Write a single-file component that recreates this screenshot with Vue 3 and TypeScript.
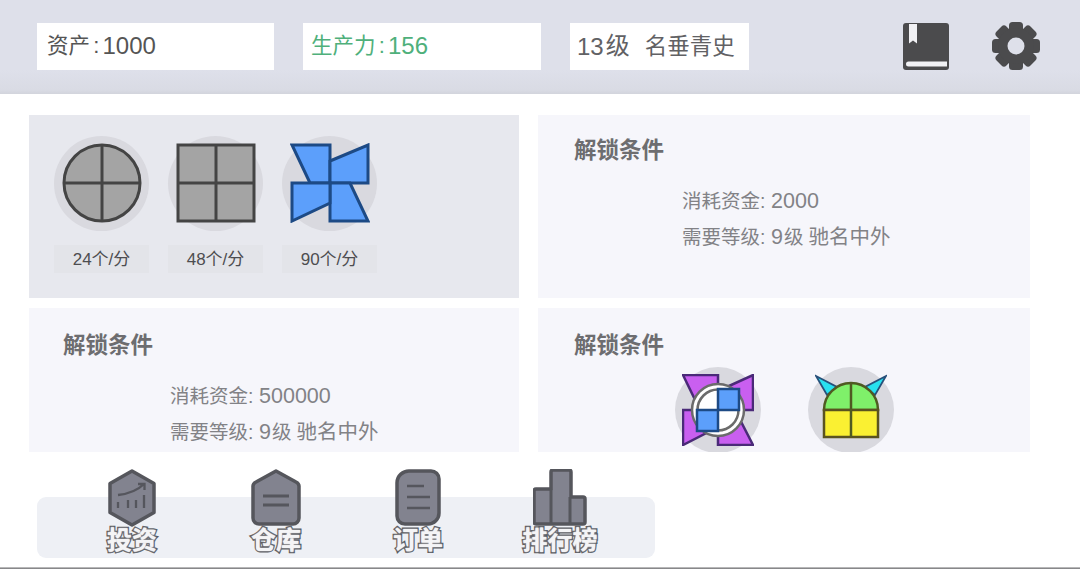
<script setup lang="ts">
const rates = ['24个/分', '48个/分', '90个/分']
const teeth = [0, 45, 90, 135, 180, 225, 270, 315]
</script>

<template>
  <div class="page">
    <header class="top">
      <div class="stat s1"><span class="line"><span class="cjk">资产</span><span class="c">:</span>1000</span></div>
      <div class="stat s2 green"><span class="line"><span class="cjk">生产力</span><span class="c">:</span>156</span></div>
      <div class="stat s3"><span class="line">13<span class="lv">级</span><span class="name">名垂青史</span></span></div>
      <div class="tools">
        <svg viewBox="0 0 48 48" width="48" height="48">
          <rect x="1" y="1" width="46" height="47" rx="3" fill="#4b4b4d"/>
          <path fill="#f1f1f4" d="M7 2H15V21.500L11 18.500 7 21.500Z"/>
          <path fill="#f1f1f4" d="M6.500 39.500H45V44.500H6.500A2.500 2.500 0 0 1 6.500 39.500Z"/>
        </svg>
        <svg viewBox="0 0 48 48" width="48" height="48">
          <g fill="#4b4b4d">
            <rect v-for="t in teeth" :key="t" x="17" y="0" width="14" height="14" rx="3.500" :transform="`rotate(${t} 24 24)`"/>
            <circle cx="24" cy="24" r="18"/>
          </g>
          <circle cx="24" cy="24" r="8.500" fill="#dee0ea"/>
        </svg>
      </div>
    </header>

    <main class="grid">
      <section class="panel active">
        <div class="machines">
          <div class="machine" v-for="(r, i) in rates" :key="r">
            <div class="disc">
              <svg v-if="i === 0" class="shape" viewBox="0 0 80 80" width="80" height="80">
                <circle cx="40" cy="40" r="38" fill="#a4a4a4" stroke="#444" stroke-width="3"/>
                <path d="M40 2V78M2 40H78" stroke="#444" stroke-width="3"/>
              </svg>
              <svg v-else-if="i === 1" class="shape" viewBox="0 0 80 80" width="80" height="80">
                <rect x="2" y="2" width="76" height="76" fill="#a4a4a4" stroke="#444" stroke-width="3"/>
                <path d="M40 2V78M2 40H78" stroke="#444" stroke-width="3"/>
              </svg>
              <svg v-else class="shape" viewBox="0 0 80 80" width="80" height="80">
                <g fill="#5c9ffb" stroke="#1d4a85" stroke-width="3" stroke-linejoin="miter">
                  <path d="M2 2H40V40H20Z"/>
                  <path d="M40 18L78 2V40H40Z"/>
                  <path d="M40 40H60L78 78H40Z"/>
                  <path d="M2 40H40V60L2 78Z"/>
                </g>
              </svg>
            </div>
            <div class="rate">{{ r }}</div>
          </div>
        </div>
      </section>

      <section class="panel">
        <h3 class="title t-right">解锁条件</h3>
        <div class="cond c-right">
          <p>消耗资金<span class="colon">:</span><span class="num">2000</span></p>
          <p>需要等级<span class="colon">:</span><span class="num">9</span>级<span class="rank">驰名中外</span></p>
        </div>
      </section>

      <section class="panel low">
        <h3 class="title t-left">解锁条件</h3>
        <div class="cond c-left">
          <p>消耗资金<span class="colon">:</span><span class="num">500000</span></p>
          <p>需要等级<span class="colon">:</span><span class="num">9</span>级<span class="rank">驰名中外</span></p>
        </div>
      </section>

      <section class="panel low">
        <h3 class="title t-right t-low">解锁条件</h3>
        <div class="rewards">
          <div class="disc small">
            <svg viewBox="0 0 72 72" width="72" height="72">
              <g fill="#c95ff0" stroke="#4a2a78" stroke-width="2.500">
                <path d="M1 1H36V36H18Z"/>
                <path d="M36 17L71 1V36H36Z"/>
                <path d="M36 36H53L71 71H36Z"/>
                <path d="M1 36H36V53L1 71Z"/>
              </g>
              <circle cx="36" cy="36" r="26" fill="#fff" stroke="#6b6b6b" stroke-width="2.500"/>
              <circle cx="36" cy="36" r="20.500" fill="#fff" stroke="#6b6b6b" stroke-width="2.500"/>
              <g fill="#5c9ffb" stroke="#1d4a85" stroke-width="2.500">
                <rect x="36" y="15" width="21" height="21"/>
                <rect x="15" y="36" width="21" height="21"/>
              </g>
            </svg>
          </div>
          <div class="disc small">
            <svg viewBox="0 0 72 72" width="72" height="72">
              <g fill="#28e0ef" stroke="#27507a" stroke-width="1.800">
                <path d="M1 2L22 13L12 21Z"/>
                <path d="M71 2L50 13L60 21Z"/>
              </g>
              <path d="M9 36A27 27 0 0 1 63 36Z" fill="#7ff06a" stroke="#4f5a22" stroke-width="2.500"/>
              <rect x="9" y="36" width="54" height="27" fill="#faf032" stroke="#5a5320" stroke-width="2.500"/>
              <path d="M36 9V63" stroke="#4f5a22" stroke-width="2.500"/>
            </svg>
          </div>
        </div>
      </section>
    </main>

    <nav class="bar">
      <div class="item i1">
        <svg viewBox="0 0 50 58" width="50" height="58">
          <path d="M25 2L47 14.500V43.500L25 56 3 43.500V14.500Z" fill="#82838f" stroke="#55565c" stroke-width="3.500" stroke-linejoin="round"/>
          <path d="M11 26C20 25 30 22 37 15M31 15H37.500V21M11 33V39M21 31V39M37 26V39M29 31V39" fill="none" stroke="#55565d" stroke-width="2.300"/>
        </svg>
        <span class="cap">投资</span>
      </div>
      <div class="item i2">
        <svg viewBox="0 0 50 58" width="50" height="58">
          <path d="M25 2L45 13a5 5 0 0 1 3 5V49a6 6 0 0 1-6 6H8a6 6 0 0 1-6-6V18a5 5 0 0 1 3-5Z" fill="#82838f" stroke="#55565c" stroke-width="3.500" stroke-linejoin="round"/>
          <path d="M12 27H38M12 36H38" stroke="#55565d" stroke-width="3"/>
        </svg>
        <span class="cap">仓库</span>
      </div>
      <div class="item i3">
        <svg viewBox="0 0 46 58" width="46" height="58">
          <path d="M15 2H36a8 8 0 0 1 8 8V44a11 11 0 0 1-11 11H10a8 8 0 0 1-8-8V14A12 12 0 0 1 15 2Z" fill="#82838f" stroke="#55565c" stroke-width="3.500"/>
          <path d="M12 17H29M12 28H35M12 39H35" stroke="#55565d" stroke-width="2.500"/>
        </svg>
        <span class="cap">订单</span>
      </div>
      <div class="item i4">
        <svg viewBox="0 0 54 58" width="54" height="58">
          <path d="M3 20H18V3a2 2 0 0 1 2-2H36a2 2 0 0 1 2 2V28H50a2 2 0 0 1 2 2V53a2 2 0 0 1-2 2H3a2 2 0 0 1-2-2V22a2 2 0 0 1 2-2Z" fill="#82838f" stroke="#55565c" stroke-width="3.500" stroke-linejoin="round"/>
          <path d="M18 20V55M37 28V55" stroke="#55565c" stroke-width="3"/>
        </svg>
        <span class="cap">排行榜</span>
      </div>
    </nav>
    <div class="edge"></div>
  </div>
</template>

<style>
html, body { margin: 0; background: #fff; }
</style>

<style scoped>
.page {
  width: 1080px;
  height: 569px;
  overflow: hidden;
  display: flex;
  flex-direction: column;
  background: #fff;
  font-family: "Liberation Sans", "Noto Sans CJK SC", sans-serif;
}
.top {
  height: 94px;
  flex: none;
  box-sizing: border-box;
  display: flex;
  align-items: flex-start;
  padding: 23px 0 0 37px;
  background: linear-gradient(#dee0ea 0, #dee0ea 70px, #d9dbe4 90px, #d2d4dc 94px);
}
.stat {
  height: 47px;
  box-sizing: border-box;
  background: #fff;
  display: flex;
  align-items: center;
  font-size: 24px;
  color: #555;
  white-space: pre;
}
.line { display: block; line-height: 30px; margin-top: -1px; }
.cjk { font-size: 21.5px; vertical-align: 1px; }
.c { display: inline-block; width: 12.5px; text-align: center; font-size: 22px; vertical-align: 1px; }
.s1 { width: 237px; padding-left: 10px; margin-right: 29px; }
.s2 { width: 238px; padding-left: 8px; margin-right: 29px; }
.s3 { width: 179px; padding-left: 7px; color: #616164; }
.lv { font-size: 24px; margin-left: 2px; vertical-align: 1px; }
.name { font-size: 22.5px; margin-left: 15px; vertical-align: 1px; }
.green { color: #4fb07b; }
.tools { display: flex; margin-left: 153px; margin-top: -1px; gap: 42px; }
.grid {
  margin: 21px 0 0 29px;
  display: grid;
  grid-template-columns: 490px 492px;
  grid-template-rows: 183px 144px;
  column-gap: 19px;
  row-gap: 10px;
  flex: none;
}
.panel { background: #f6f6fb; overflow: hidden; }
.active { background: #e7e8ee; }
.machines { display: flex; gap: 19px; padding: 21px 0 0 25px; }
.machine { width: 95px; display: flex; flex-direction: column; align-items: center; }
.disc {
  width: 95px;
  height: 95px;
  border-radius: 50%;
  background: #d9d9df;
  display: flex;
  align-items: center;
  justify-content: center;
}
.shape { margin-bottom: 2px; }
.rate {
  margin-top: 14px;
  width: 95px;
  height: 28px;
  box-sizing: border-box;
  padding-bottom: 3px;
  background: #e3e4e9;
  font-size: 17px;
  color: #4d4d50;
  display: flex;
  align-items: center;
  justify-content: center;
}
.title {
  margin: 0;
  font-size: 22.5px;
  font-weight: 700;
  color: #6d6d70;
  line-height: 30px;
  padding-top: 21px;
}
.t-right { padding-left: 36px; }
.t-left { padding-left: 34px; padding-top: 23px; }
.t-low { padding-top: 23px; }
.cond { font-size: 19.5px; color: #828286; }
.cond p { margin: 0; line-height: 36px; white-space: pre; }
.colon { display: inline-block; width: 11px; text-align: left; }
.num { font-size: 21.5px; margin-right: 1px; }
.rank { font-size: 20.5px; margin-left: 5px; }
.c-right { padding: 17px 0 0 144px; }
.c-left { padding: 17px 0 0 141px; }
.rewards {
  display: flex;
  gap: 47px;
  padding: 6px 0 0 137px;
}
.small { width: 86px; height: 86px; }
.bar {
  margin: 45px 0 0 37px;
  width: 618px;
  height: 61px;
  flex: none;
  position: relative;
  background: #eef0f5;
  border-radius: 9px;
}
.item {
  position: absolute;
  top: -28px;
  display: flex;
  flex-direction: column;
  align-items: center;
  width: 90px;
}
.i1 { left: 50px; }
.i2 { left: 194px; }
.i3 { left: 336px; }
.i4 { left: 478px; }
.cap {
  margin-top: -1px;
  font-size: 25px;
  line-height: 28px;
  font-weight: 700;
  color: #f4f4f6;
  white-space: nowrap;
  -webkit-text-stroke: 3px #5a5b61;
  paint-order: stroke fill;
  text-shadow: 0 0 1.500px #fff;
}
.edge {
  flex: none;
  margin-top: 9px;
  height: 2px;
  background: linear-gradient(#cfcfcf, #707072);
}
</style>
